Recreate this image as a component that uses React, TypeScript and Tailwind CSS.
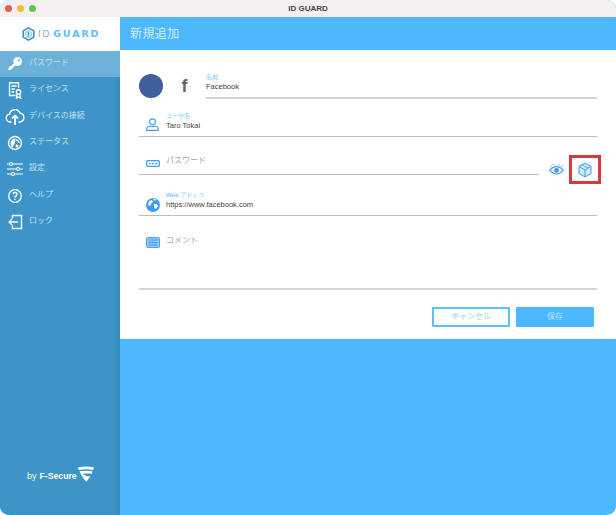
import React from "react";

const jp = "font-['Liberation_Sans','Noto_Sans_CJK_JP',sans-serif]";

function LogoHex() {
  return (
    <svg width="13" height="14" viewBox="0 0 16 17" fill="none">
      <path d="M8 1l6.500 3.700v7.600L8 16l-6.500-3.700V4.700z" stroke="#3d94c9" strokeWidth="2" />
      <path d="M8 4.500l3.200 1.900v4.200L8 12.500l-3.200-1.900V6.400z" stroke="#7ccbff" strokeWidth="1.500" />
      <path d="M8 6v5" stroke="#3d94c9" strokeWidth="1.500" />
    </svg>
  );
}

function KeyIcon() {
  return (
    <svg width="18" height="18" viewBox="0 0 18 18" fill="none">
      <path d="M11.500 2a4.500 4.500 0 1 1-2.300 8.400L4.700 15H2.500v-2.400l1.300-.1V11h1.500l2.400-2.400A4.500 4.500 0 0 1 11.500 2z" fill="white" />
      <circle cx="12.800" cy="5.300" r="1.100" fill="#6cb1d7" />
    </svg>
  );
}

function LicenseIcon() {
  return (
    <svg width="18" height="18" viewBox="0 0 18 18" fill="none" stroke="white" strokeWidth="1.400">
      <path d="M9.500 14.500H3.500V1.800h9V7" />
      <path d="M5.500 5h5M5.500 8h3.500M5.500 11h2.500" />
      <circle cx="12.500" cy="11" r="2.200" />
      <path d="M11 13.500l-.5 3.500 2-1 2 1-.5-3.500" />
    </svg>
  );
}

function CloudIcon() {
  return (
    <svg width="20" height="18" viewBox="0 0 20 18" fill="none" stroke="white" strokeWidth="1.400">
      <path d="M6.500 14H5a4 4 0 0 1-.5-7.900 5.500 5.500 0 0 1 10.500-1A4.500 4.500 0 0 1 15 14h-1.500" />
      <path d="M10 17V8M7 10.500L10 7.500l3 3" strokeWidth="1.800" />
    </svg>
  );
}

function StatusIcon() {
  return (
    <svg width="18" height="18" viewBox="0 0 18 18" fill="none">
      <circle cx="9" cy="9" r="6.500" stroke="white" strokeWidth="1.400" />
      <path d="M9.500 4.500A5 5 0 0 0 6.500 13.500L9 9z" fill="white" />
      <path d="M10 6a3 3 0 0 1 3 3" stroke="white" strokeWidth="1.300" />
      <circle cx="11" cy="12" r="1.400" fill="white" />
    </svg>
  );
}

function SlidersIcon() {
  return (
    <svg width="20" height="18" viewBox="0 0 20 18" fill="none" stroke="white" strokeWidth="1.200">
      <path d="M2 4h16M2 9h16M2 14h16" />
      <circle cx="6" cy="4" r="1.500" fill="#3d94c9" />
      <circle cx="13" cy="9" r="1.500" fill="#3d94c9" />
      <circle cx="8" cy="14" r="1.500" fill="#3d94c9" />
    </svg>
  );
}

function HelpIcon() {
  return (
    <svg width="18" height="18" viewBox="0 0 18 18" fill="none" stroke="white" strokeWidth="1.300">
      <circle cx="9" cy="9" r="6.300" />
      <path d="M7 7.300A2 2 0 1 1 9 9.500v1.200" />
      <path d="M9 11.800v1.200" />
    </svg>
  );
}

function LockIcon() {
  return (
    <svg width="18" height="18" viewBox="0 0 18 18" fill="none" stroke="white" strokeWidth="1.400">
      <path d="M6.500 5.500V2.500h9v13h-9v-3" />
      <path d="M12 9H3M6 6L3 9l3 3" />
    </svg>
  );
}

function FSecureLogo() {
  return (
    <svg width="16" height="16" viewBox="0 0 16 16" fill="white">
      <path d="M0 1.200C5 .200 11 .200 16 1.200L15.200 4C10.500 3 5.500 3 .800 4z" />
      <path d="M1.500 5.300c4-.800 9-.800 13 0l-.9 2.600c-2.500-.500-6-.500-9 .100L9.500 10.500l3-.500L8.500 15.800C5.500 13 3 9 1.500 5.300z" />
    </svg>
  );
}

function UserIcon() {
  return (
    <svg width="13" height="13" viewBox="0 0 13 13" fill="none" stroke="#3f9cf2" strokeWidth="1.100">
      <circle cx="6.500" cy="3.800" r="2.900" />
      <path d="M.700 12.400v-1.400c0-1.800 1.300-2.700 3-3 1.700.700 3.900.700 5.600 0 1.700.300 3 1.200 3 3v1.400z" />
    </svg>
  );
}

function PasswordIcon() {
  return (
    <svg width="14" height="7" viewBox="0 0 14 7" fill="none">
      <rect x=".700" y=".700" width="12.600" height="5.600" rx="1" stroke="#3f9cf2" strokeWidth="1.300" />
      <path d="M2.800 3.500h1.900M6 3.500h1.900M9.300 3.500h1.900" stroke="#3f9cf2" strokeWidth="1.500" />
    </svg>
  );
}

function GlobeIcon() {
  return (
    <svg width="14" height="14" viewBox="0 0 14 14">
      <circle cx="7" cy="7" r="7" fill="#3f9cf2" />
      <path d="M3 3l3-1 1 2-2 2-1 2-2-1zM8 6l3 0 1 2-2 3-2-1zM7 1h3l-1 2z" fill="white" />
    </svg>
  );
}

function CommentIcon() {
  return (
    <svg width="14" height="11" viewBox="0 0 14 11" fill="none">
      <rect x=".500" y=".500" width="13" height="10" rx="1" fill="#8cc8fb" stroke="#4aa3f5" />
      <path d="M2.500 3h9M2.500 5.500h9M2.500 8h9" stroke="#2f8ee8" strokeWidth=".800" />
    </svg>
  );
}

function EyeIcon() {
  return (
    <svg width="15" height="11" viewBox="0 0 15 11" fill="none" stroke="#3f9cf2">
      <path d="M.800 6.200C3 3.400 5 2.600 7.500 2.600s4.500.800 6.700 3.600C12 9 10 10 7.500 10S3 9 .800 6.200z" strokeWidth="1.200" />
      <circle cx="7.500" cy="6.200" r="2.200" fill="#3f9cf2" strokeWidth=".500" />
      <path d="M2.500 2.600L1.600 1.400M5 1.500L4.600.300M10 1.500L10.400.300M12.500 2.600l.9-1.200" strokeWidth="1" />
    </svg>
  );
}

function BoxIcon() {
  return (
    <svg width="14" height="16" viewBox="0 0 14 16" fill="none" stroke="#3f9cf2" strokeWidth="1">
      <path d="M7 1l6 3.400v7.200L7 15l-6-3.400V4.400z" fill="#d5ebfe" />
      <path d="M1 4.400L7 8l6-3.600M7 8v7" />
      <path d="M4 2.700l6 3.500" />
    </svg>
  );
}

const nav = [
  { label: "パスワード", icon: <KeyIcon />, active: true },
  { label: "ライセンス", icon: <LicenseIcon /> },
  { label: "デバイスの接続", icon: <CloudIcon /> },
  { label: "ステータス", icon: <StatusIcon /> },
  { label: "設定", icon: <SlidersIcon /> },
  { label: "ヘルプ", icon: <HelpIcon /> },
  { label: "ロック", icon: <LockIcon /> },
];

export default function App() {
  return (
    <div className={`w-[616px] h-[515px] overflow-hidden rounded-[9px] flex flex-col bg-[#4cb8ff] ${jp}`}>
      {/* Title bar */}
      <div className="h-[17px] shrink-0 bg-[#f4f0f1] flex items-center relative">
        <div className="flex gap-[5px] pl-[5px] -mt-px">
          <span className="w-[7px] h-[7px] rounded-full bg-[#ee5a52]" />
          <span className="w-[7px] h-[7px] rounded-full bg-[#f5bd3c]" />
          <span className="w-[7px] h-[7px] rounded-full bg-[#62c454]" />
        </div>
        <span className="absolute inset-x-0 text-center text-[8px] font-bold text-[#444]">ID GUARD</span>
      </div>

      <div className="flex flex-1 min-h-0">
        {/* Sidebar */}
        <aside className="w-[120px] shrink-0 flex flex-col bg-[#3d94c9] shadow-[inset_-5px_0_5px_-3px_rgba(0,0,0,0.08)]">
          <div className="h-[34px] bg-white flex items-center pl-[22px] gap-[3px]">
            <LogoHex />
            <span className="text-[9.500px] tracking-[1.500px] text-[#9fb0bb] font-['DejaVu_Sans',sans-serif] leading-none">ID</span>
            <span className="-ml-[1px] text-[9.500px] font-bold tracking-[1.900px] text-[#5cbcff] font-['DejaVu_Sans',sans-serif] leading-none">GUARD</span>
          </div>
          <nav className="flex flex-col">
            {nav.map((n) => (
              <div key={n.label} className={`h-[26.3px] flex items-center ${n.active ? "bg-[#6cb1d7]" : ""}`}>
                <span className="w-[29px] flex justify-center pl-[1px]">{n.icon}</span>
                <span className="text-[8px] text-[#c3e0f1] mb-[2px]">{n.label}</span>
              </div>
            ))}
          </nav>
          <div className="mt-auto mb-[33px] flex items-end pl-[27px] text-white">
            <span className="text-[9px] leading-none mr-[3px] mb-[1px]">by</span>
            <span className="text-[8.700px] leading-none font-bold mr-[1px] mb-[1px]">F-Secure</span>
            <FSecureLogo />
          </div>
        </aside>

        {/* Main */}
        <main className="w-[496px] shrink-0 flex flex-col">
          <div className="h-[33px] flex items-center pl-[10px] text-[12px] text-[#d6eeff] tracking-[0.4px]">新規追加</div>
          <section className="h-[289px] bg-white px-[19px] pt-[22px] flex flex-col">
            {/* Name */}
            <div className="flex h-[27px] items-center">
              <span className="w-[24px] h-[24px] rounded-full bg-[#3e5f9c] shrink-0" />
              <span className="w-[43px] text-center text-[18px] font-bold text-[#666] leading-none">f</span>
              <div className="flex-1 h-full border-b-2 border-[#d4d4d4] leading-none pt-[2px]">
                <div className="text-[6px] text-[#7dcbff]">名前</div>
                <div className="text-[7.500px] text-[#444] mt-[3px]">Facebook</div>
              </div>
            </div>
            {/* User */}
            <div className="flex h-[38px] items-end border-b border-[#bdbdbd] pb-[7px]">
              <span className="w-[27px] flex justify-center -mb-[2px]"><UserIcon /></span>
              <div className="leading-none">
                <div className="text-[6px] text-[#7dcbff]">ユーザ名</div>
                <div className="text-[7.500px] text-[#444] mt-[3px]">Taro Tokai</div>
              </div>
            </div>
            {/* Password */}
            <div className="flex h-[38px] items-end">
              <div className="w-[400px] shrink-0 h-full border-b border-[#bdbdbd] flex items-center pt-[10px]">
                <span className="w-[27px] flex justify-center pt-[5px]"><PasswordIcon /></span>
                <span className="text-[8px] text-[#a8a8a8]">パスワード</span>
              </div>
              <span className="ml-[10px] flex w-[15px] shrink-0 justify-center"><EyeIcon /></span>
              <span className="ml-[5px] mb-[-9px] w-[32px] h-[29px] shrink-0 border-[3px] border-[#d8393b] flex items-center justify-center bg-white"><BoxIcon /></span>
            </div>
            {/* Web */}
            <div className="flex h-[41px] items-end border-b border-[#bdbdbd] pb-[7px]">
              <span className="w-[27px] flex justify-center -mb-[4px]"><GlobeIcon /></span>
              <div className="leading-none">
                <div className="text-[6px] text-[#7dcbff]"><span className="font-bold">Web</span> アドレス</div>
                <div className="text-[7.500px] text-[#444] mt-[3px]">https://www.facebook.com</div>
              </div>
            </div>
            {/* Comment */}
            <div className="flex h-[74px] border-b-2 border-[#d4d4d4] pt-[21px]">
              <span className="w-[27px] flex justify-center"><CommentIcon /></span>
              <span className="text-[8px] text-[#a8a8a8] leading-none">コメント</span>
            </div>
            {/* Buttons */}
            <div className="flex justify-end gap-[6px] mt-[17px] pr-[3px]">
              <button className="w-[78px] h-[20px] border-2 border-[#5cc0ff] rounded-[1px] text-[8px] text-[#8fd3ff] flex items-center justify-center">キャンセル</button>
              <button className="w-[78px] h-[20px] bg-[#4cb8ff] rounded-[1px] text-[8px] text-[#b5e2ff] flex items-center justify-center">保存</button>
            </div>
          </section>
        </main>
      </div>
    </div>
  );
}
